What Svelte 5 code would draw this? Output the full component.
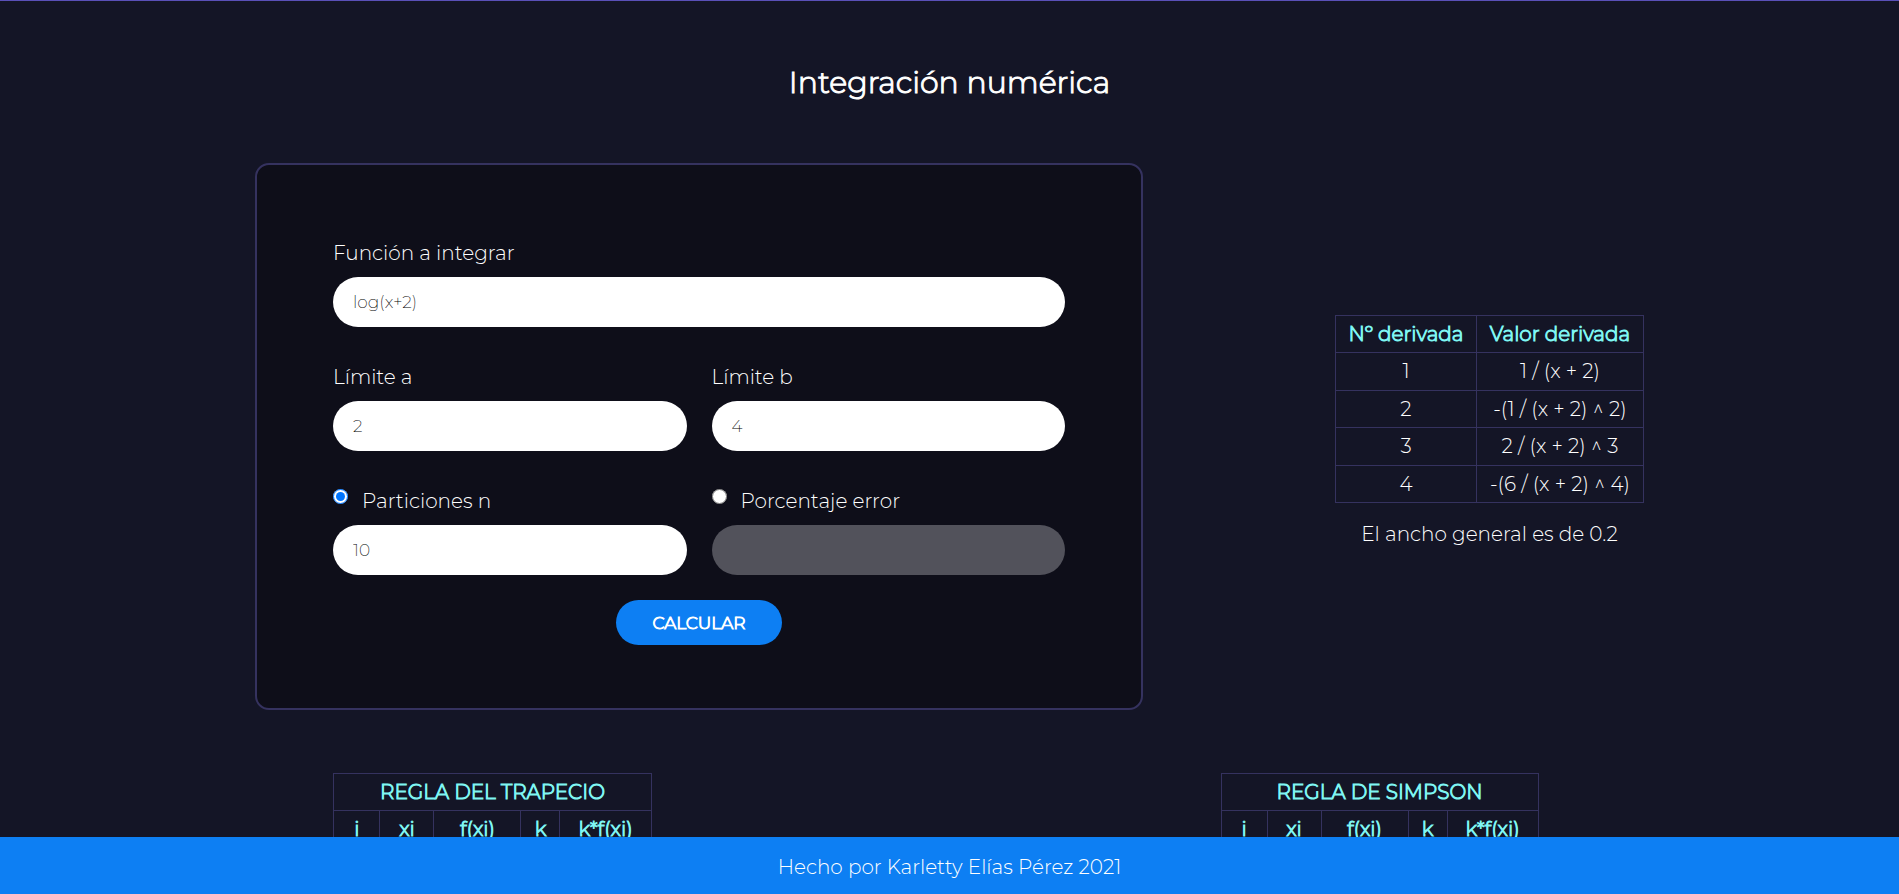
<script>
  let mode = $state('particiones');
  let fn = $state('log(x+2)');
  let a = $state('2');
  let b = $state('4');
  let n = $state('10');
  let error = $state('');

  const derivatives = [
    [1, '1 / (x + 2)'],
    [2, '-(1 / (x + 2) ^ 2)'],
    [3, '2 / (x + 2) ^ 3'],
    [4, '-(6 / (x + 2) ^ 4)'],
  ];
  const rules = ['REGLA DEL TRAPECIO', 'REGLA DE SIMPSON'];
  const columns = ['i', 'xi', 'f(xi)', 'k', 'k*f(xi)'];
</script>

<div class="page">
  <h1>Integración numérica</h1>

  <main>
    <section class="top">
      <form onsubmit={(e) => e.preventDefault()}>
        <div class="field wide">
          <label for="fn">Función a integrar</label>
          <input id="fn" type="text" bind:value={fn} />
        </div>
        <div class="field">
          <label for="a">Límite a</label>
          <input id="a" type="text" bind:value={a} />
        </div>
        <div class="field">
          <label for="b">Límite b</label>
          <input id="b" type="text" bind:value={b} />
        </div>
        <div class="field">
          <label class="choice">
            <input type="radio" name="mode" value="particiones" bind:group={mode} />
            <span id="n-label">Particiones n</span>
          </label>
          <input type="text" aria-labelledby="n-label" bind:value={n} disabled={mode !== 'particiones'} />
        </div>
        <div class="field">
          <label class="choice">
            <input type="radio" name="mode" value="error" bind:group={mode} />
            <span id="error-label">Porcentaje error</span>
          </label>
          <input type="text" aria-labelledby="error-label" bind:value={error} disabled={mode !== 'error'} />
        </div>
        <button type="submit">CALCULAR</button>
      </form>

      <div class="side">
        <table class="derivatives">
          <thead>
            <tr><th>Nº derivada</th><th>Valor derivada</th></tr>
          </thead>
          <tbody>
            {#each derivatives as [order, value]}
              <tr><td>{order}</td><td>{value}</td></tr>
            {/each}
          </tbody>
        </table>
        <p>El ancho general es de 0.2</p>
      </div>
    </section>

    <section class="results">
      {#each rules as rule}
        <table class="rule">
          <colgroup>
            <col class="c-i" /><col class="c-xi" /><col class="c-f" /><col class="c-k" /><col class="c-kf" />
          </colgroup>
          <thead>
            <tr><th colspan="5">{rule}</th></tr>
            <tr>
              {#each columns as column}
                <th>{column}</th>
              {/each}
            </tr>
          </thead>
        </table>
      {/each}
    </section>
  </main>

  <footer>Hecho por Karletty Elías Pérez 2021</footer>
</div>

<style>
  :global(body) {
    background: #141526;
  }
  * {
    box-sizing: border-box;
  }
  .page {
    min-height: 100vh;
    border-top: 1px solid #5a50b8;
    color: #fff;
    font: 300 20px/24px Montserrat, Inter, sans-serif;
  }
  h1,
  th,
  button {
    font-weight: 300;
    -webkit-text-stroke: 1px currentColor;
  }
  h1 {
    margin: 0;
    padding: 63px 0 61px;
    text-align: center;
    font-size: 30px;
    line-height: 38px;
  }
  .top {
    display: flex;
    gap: 192px;
    align-items: center;
    padding: 0 255px;
  }
  form {
    flex: 1;
    display: grid;
    grid-template-columns: 1fr 1fr;
    gap: 38px 25px;
    padding: 76px 76px 63px;
    background: #0e0e19;
    border: 2px solid #35325f;
    border-radius: 14px;
  }
  .field {
    display: flex;
    flex-direction: column;
    gap: 12px;
  }
  .wide {
    grid-column: 1 / -1;
  }
  input[type='text'] {
    width: 100%;
    height: 50px;
    padding: 0 20px;
    border: 0;
    border-radius: 25px;
    background: #fff;
    color: #000;
    font: inherit;
    font-size: 17px;
    font-weight: 200;
  }
  input[type='text']:disabled {
    background: #52525b;
  }
  .choice {
    display: flex;
    align-items: flex-start;
    gap: 14px;
  }
  input[type='radio'] {
    width: 15px;
    height: 15px;
    margin: 0;
    flex: none;
  }
  button {
    grid-column: 1 / -1;
    justify-self: center;
    width: 166px;
    height: 45px;
    margin-top: -13px;
    border: 0;
    border-radius: 23px;
    background: #0d7ff3;
    color: #fff;
    font-family: inherit;
    font-size: 17px;
  }
  .side {
    padding-bottom: 12px;
    text-align: center;
  }
  .side p {
    margin: 19px 0 0;
  }
  table {
    border-collapse: collapse;
    text-align: center;
  }
  th,
  td {
    padding: 6px;
    border: 1px solid #35325f;
  }
  th {
    color: #7ff6f3;
  }
  .derivatives {
    width: 309px;
    height: 188px;
  }
  .derivatives th:first-child {
    width: 141px;
  }
  .results {
    display: grid;
    grid-template-columns: 1fr 1fr;
    justify-items: center;
    padding: 63px 76px 0 49px;
  }
  .rule {
    table-layout: fixed;
    width: 318px;
  }
  .c-i {
    width: 46px;
  }
  .c-xi {
    width: 54px;
  }
  .c-f {
    width: 87px;
  }
  .c-k {
    width: 39px;
  }
  .c-kf {
    width: 91px;
  }
  .rule th {
    padding: 6px 0;
  }
  footer {
    position: fixed;
    inset: auto 0 0;
    padding: 18px 0 15px;
    background: #0d7ff3;
    text-align: center;
  }
</style>
